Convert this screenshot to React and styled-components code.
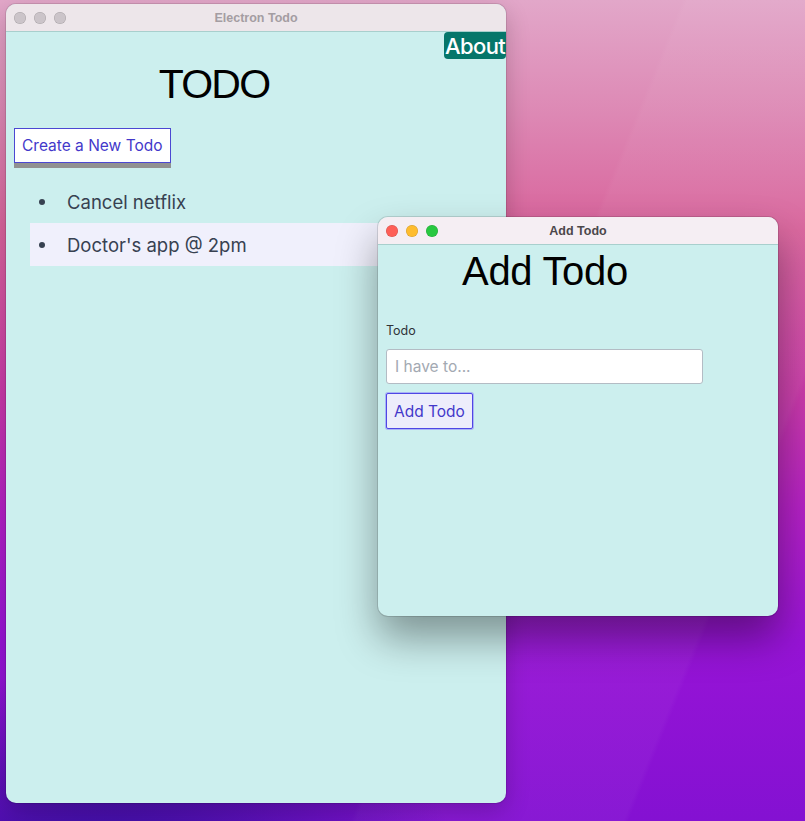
import React from "react";
import styled, { createGlobalStyle } from "styled-components";

const GlobalStyle = createGlobalStyle`
  html, body {
    margin: 0;
    padding: 0;
    overflow: hidden;
  }
  * {
    box-sizing: border-box;
  }
`;

const Desktop = styled.div`
  position: relative;
  width: 805px;
  height: 821px;
  overflow: hidden;
  font-family: "Inter", "Liberation Sans", sans-serif;
  background:
    radial-gradient(ellipse 520px 300px at 100px 880px, rgba(40, 14, 150, 0.95), rgba(40, 14, 150, 0) 70%),
    linear-gradient(112deg, rgba(255, 255, 255, 0) 60%, rgba(255, 255, 255, 0.035) 60.5%, rgba(255, 255, 255, 0.035) 84%, rgba(255, 255, 255, 0) 84.5%),
    linear-gradient(180deg, #e2a7c9 0%, #dd88b4 14%, #d9649c 28%, #c93aa9 48%, #b321c4 62%, #9714d6 78%, #8411d2 100%);
`;

const Window = styled.div`
  position: absolute;
  left: ${(p) => p.$left}px;
  top: ${(p) => p.$top}px;
  width: ${(p) => p.$width}px;
  height: ${(p) => p.$height}px;
  border-radius: 10px;
  overflow: hidden;
  background: #ccefee;
  display: flex;
  flex-direction: column;
  box-shadow: ${(p) =>
    p.$active
      ? "0 0 0 1px rgba(0,0,0,0.12), 0 22px 40px rgba(0, 0, 0, 0.38)"
      : "0 0 0 1px rgba(0,0,0,0.1), 0 8px 24px rgba(0, 0, 0, 0.2)"};
`;

const TitleBar = styled.div`
  position: relative;
  height: 28px;
  flex-shrink: 0;
  display: flex;
  align-items: center;
  justify-content: center;
  background: ${(p) => (p.$active ? "#f5eef3" : "#ede6ea")};
  border-bottom: 1px solid #a8cfcd;
  font-family: "Liberation Sans", "Inter", sans-serif;
  font-size: 12.5px;
  font-weight: 700;
  color: ${(p) => (p.$active ? "#4b474a" : "#a49da2")};
`;

const Lights = styled.div`
  position: absolute;
  left: 8px;
  top: 8px;
  display: flex;
  gap: 8px;
`;

const Light = styled.span`
  width: 12px;
  height: 12px;
  border-radius: 50%;
  background: ${(p) => p.$color};
  box-shadow: inset 0 0 0 0.5px rgba(0, 0, 0, 0.18);
`;

const Content = styled.div`
  flex: 1;
  display: flex;
  flex-direction: column;
`;

const Nav = styled.nav`
  display: flex;
  justify-content: flex-end;
`;

const AboutLink = styled.a`
  display: block;
  height: 27px;
  line-height: 29px;
  padding: 0 0 0 1px;
  width: 62px;
  overflow: hidden;
  white-space: nowrap;
  border-radius: 4px 0 4px 4px;
  background: #05766a;
  color: #fff;
  font-family: "Inter", sans-serif;
  font-size: 22px;
  font-weight: 500;
  letter-spacing: -0.6px;
  text-decoration: none;
`;

const Heading = styled.h1`
  margin: ${(p) => p.$mt}px 0 0;
  padding-right: ${(p) => p.$pr}px;
  text-align: center;
  font-family: "Liberation Sans", sans-serif;
  font-weight: 400;
  font-size: ${(p) => p.$size}px;
  line-height: 1;
  letter-spacing: ${(p) => p.$ls}px;
  color: #000;
`;

const CreateButton = styled.button`
  align-self: flex-start;
  margin: 23px 0 0 8px;
  height: 35px;
  padding: 0 7px;
  background: #fff;
  border: 1px solid #4b48d2;
  border-radius: 0;
  box-shadow: 0 5px 0 #919191;
  color: #4338ca;
  font-family: "Inter", sans-serif;
  font-size: 15.5px;
  cursor: pointer;
`;

const List = styled.ul`
  list-style: none;
  margin: 17px 16px 0 24px;
  padding: 0;
`;

const Item = styled.li`
  display: flex;
  align-items: center;
  gap: 22px;
  height: 43px;
  padding-left: 9px;
  background: ${(p) => (p.$highlight ? "#f0f0fc" : "transparent")};
  color: #374151;
  font-size: 18.5px;
`;

const Dot = styled.span`
  width: 6px;
  height: 6px;
  border-radius: 50%;
  background: #374151;
`;

const Form = styled.form`
  display: flex;
  flex-direction: column;
  align-items: flex-start;
  padding: 0 8px;
  margin-top: 32px;
`;

const Label = styled.label`
  font-size: 12.5px;
  line-height: 16px;
  color: #2f3438;
`;

const Input = styled.input`
  margin-top: 10px;
  width: 317px;
  height: 35px;
  padding: 0 8px;
  border: 1px solid #b3bcc4;
  border-radius: 3px;
  background: #fff;
  font-family: "Inter", sans-serif;
  font-size: 15.5px;
  color: #111;
  outline: none;

  &::placeholder {
    color: #a3a9b2;
  }
`;

const SubmitButton = styled.button`
  margin-top: 9px;
  height: 36px;
  padding: 0 7px;
  background: #ededfb;
  border: 1px solid #4f46e5;
  border-radius: 2px;
  box-shadow: 0 0 0 1px #a9b5f5;
  color: #4338ca;
  font-family: "Inter", sans-serif;
  font-size: 15.5px;
  cursor: pointer;
`;

const todos = [
  { id: 1, text: "Cancel netflix" },
  { id: 2, text: "Doctor's app @ 2pm" },
];

function TrafficLights({ active }) {
  const colors = active
    ? ["#fe5f57", "#febc2e", "#28c840"]
    : ["#cbc4c9", "#cbc4c9", "#cbc4c9"];
  return (
    <Lights>
      {colors.map((c, i) => (
        <Light key={i} $color={c} />
      ))}
    </Lights>
  );
}

export default function App() {
  return (
    <>
      <GlobalStyle />
      <Desktop>
        <Window $left={6} $top={4} $width={500} $height={799}>
          <TitleBar>
            <TrafficLights />
            Electron Todo
          </TitleBar>
          <Content>
            <Nav>
              <AboutLink href="#">About</AboutLink>
            </Nav>
            <Heading $mt={5} $pr={84} $size={41} $ls={-1.8}>
              TODO
            </Heading>
            <CreateButton>Create a New Todo</CreateButton>
            <List>
              {todos.map((t, i) => (
                <Item key={t.id} $highlight={i % 2 === 1}>
                  <Dot />
                  {t.text}
                </Item>
              ))}
            </List>
          </Content>
        </Window>

        <Window $left={378} $top={217} $width={400} $height={399} $active>
          <TitleBar $active>
            <TrafficLights active />
            Add Todo
          </TitleBar>
          <Content>
            <Heading $mt={6} $pr={66} $size={40} $ls={-0.3}>
              Add Todo
            </Heading>
            <Form onSubmit={(e) => e.preventDefault()}>
              <Label htmlFor="todo">Todo</Label>
              <Input id="todo" placeholder="I have to..." />
              <SubmitButton type="submit">Add Todo</SubmitButton>
            </Form>
          </Content>
        </Window>
      </Desktop>
    </>
  );
}
